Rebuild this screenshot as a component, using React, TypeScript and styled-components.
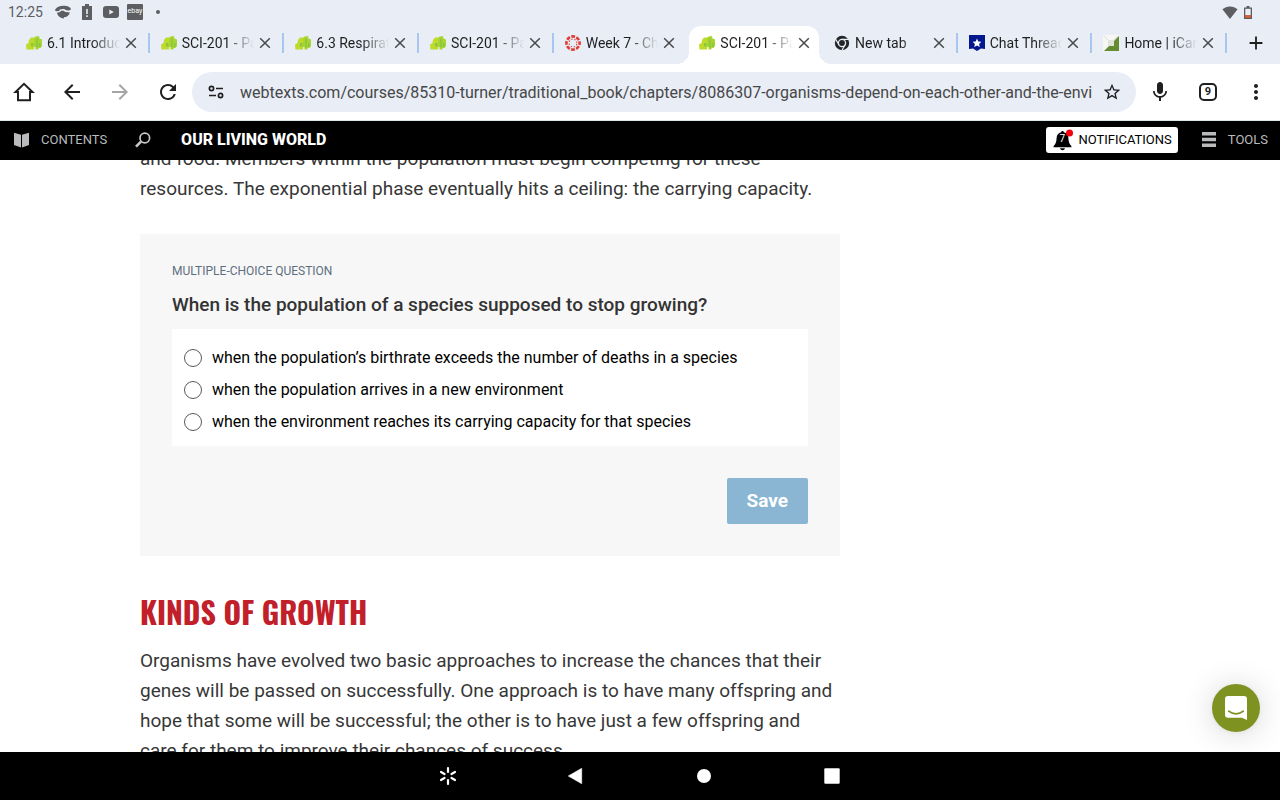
import React from 'react';
import styled, { createGlobalStyle, css } from 'styled-components';
import {
  MdAdd,
  MdArrowBack,
  MdArrowForward,
  MdMic,
  MdMoreVert,
  MdRefresh,
  MdStarBorder,
} from 'react-icons/md';

const GlobalStyle = createGlobalStyle`
  *, *::before, *::after { box-sizing: border-box; }
  body {
    margin: 0;
    background: #fff;
    font-family: Roboto, "Liberation Sans", sans-serif;
  }
  button, input { font: inherit; }
  h1, h2, p, fieldset { margin: 0; }
`;

const Screen = styled.div`
  display: flex;
  flex-direction: column;
  height: 100vh;
  overflow: hidden;
`;

/* ---------- status bar ---------- */

const StatusBar = styled.div`
  flex: none;
  display: flex;
  align-items: center;
  justify-content: space-between;
  height: 24px;
  padding: 0 28px 0 8px;
  background: #e8edf6;
  color: #5c5e62;
`;

const StatusGroup = styled.div<{ $gap: number }>`
  display: flex;
  align-items: center;
  gap: ${(p) => p.$gap}px;
`;

const Clock = styled.span`
  margin-right: 4px;
  font-size: 14px;
  line-height: 24px;
`;

/* ---------- tab strip ---------- */

const TabStrip = styled.div`
  flex: none;
  display: flex;
  height: 40px;
  padding-left: 15px;
  background: #e8edf6;
`;

const activeTab = css`
  margin: 2px 4px 0 1px;
  padding: 0 6px 4px 10px;
  border-radius: 12px 12px 0 0;
  background: #fff;
  &::before,
  &::after {
    content: '';
    position: absolute;
    bottom: 0;
    width: 12px;
    height: 12px;
  }
  &::before {
    right: 100%;
    background: radial-gradient(circle at 0 0, transparent 12px, #fff 12px);
  }
  &::after {
    left: 100%;
    background: radial-gradient(circle at 100% 0, transparent 12px, #fff 12px);
  }
`;

const Tab = styled.div<{ $active?: boolean; $divider?: boolean }>`
  position: relative;
  flex: 1 1 0;
  min-width: 0;
  display: flex;
  align-items: center;
  padding: 0 10px 2px 11px;
  ${(p) =>
    p.$divider &&
    css`
      &::after {
        content: '';
        position: absolute;
        right: 0;
        top: 9px;
        width: 2px;
        height: 20px;
        background: #a8c7f0;
      }
    `}
  ${(p) => p.$active && activeTab}
`;

const TabTitle = styled.span`
  flex: 1;
  min-width: 0;
  margin: 0 2px 0 5px;
  overflow: hidden;
  white-space: nowrap;
  font-size: 14px;
  line-height: 20px;
  color: #1f1f1f;
  mask-image: linear-gradient(90deg, #000 62%, transparent);
`;

const IconButton = styled.button<{ $w: number; $color?: string }>`
  flex: none;
  display: flex;
  align-items: center;
  justify-content: center;
  width: ${(p) => p.$w}px;
  padding: 0;
  border: 0;
  background: none;
  color: ${(p) => p.$color ?? '#1f1f1f'};
`;

const NewTab = styled.div`
  flex: none;
  display: flex;
  width: 53px;
  padding: 0 0 2px 5px;
`;

/* ---------- browser toolbar ---------- */

const Toolbar = styled.div`
  flex: none;
  display: flex;
  align-items: stretch;
  height: 57px;
  padding: 8px 0;
  border-bottom: 1px solid #dfe6ea;
`;

const AddressBar = styled.div`
  flex: 1;
  min-width: 0;
  display: flex;
  align-items: center;
  padding-right: 6px;
  border-radius: 20px;
  background: #e8edf6;
`;

const AddressInput = styled.input`
  flex: 1;
  min-width: 0;
  padding: 2px 0 0;
  border: 0;
  outline: 0;
  background: none;
  color: #474747;
  font-size: 16px;
  line-height: 24px;
`;

const TabCount = styled.span`
  display: block;
  width: 18px;
  height: 18px;
  border: 2px solid #1f1f1f;
  border-radius: 5px;
  font-size: 11px;
  font-weight: 700;
  line-height: 14px;
  text-align: center;
`;

/* ---------- book header ---------- */

const BookBar = styled.header`
  flex: none;
  display: flex;
  align-items: center;
  height: 39px;
  padding: 0 12px 2px 14px;
  background: #000;
`;

const BarButton = styled.button`
  display: flex;
  align-items: center;
  gap: 12px;
  padding: 0;
  border: 0;
  background: none;
  color: #b9bbbd;
  font-size: 13px;
  font-weight: 400;
  line-height: 26px;
`;

const SearchButton = styled(BarButton)`
  margin: 0 30px 0 28px;
`;

const BookTitle = styled.h1`
  flex: 1;
  color: #fff;
  font-size: 16px;
  font-weight: 800;
  line-height: 26px;
`;

const NotificationsButton = styled(BarButton)`
  gap: 5px;
  height: 26px;
  margin-right: 24px;
  padding: 0 6px 0 7px;
  border-radius: 3px;
  background: #fff;
  color: #000;
`;

const BellBox = styled.span`
  position: relative;
  display: block;
  width: 20px;
  height: 22px;
`;

const BellCount = styled.span`
  position: absolute;
  inset: 4px 2px auto 0;
  color: #fff;
  font-size: 10px;
  line-height: 12px;
  text-align: center;
`;

/* ---------- reading pane ---------- */

const Reader = styled.main`
  flex: 1;
  min-height: 0;
  overflow: hidden;
  padding: 0 20px 0 140px;
`;

const Column = styled.article`
  max-width: 700px;
  margin-top: -16px;
`;

const Paragraph = styled.p`
  color: #373737;
  font-size: 19px;
  line-height: 30px;
`;

const QuestionCard = styled.form`
  display: flex;
  flex-direction: column;
  margin: 30px 0 36px;
  padding: 28px 32px 32px;
  background: #f7f7f7;
`;

const Eyebrow = styled.div`
  color: #5d6f7e;
  font-size: 12px;
  line-height: 18px;
`;

const Question = styled.legend`
  padding: 10px 0 9px;
  color: #333;
  font-size: 19px;
  font-weight: 500;
  line-height: 30px;
`;

const OptionGroup = styled.fieldset`
  min-width: 0;
  margin-bottom: 32px;
  padding: 0;
  border: 0;
`;

const OptionList = styled.div`
  padding: 13px 12px 8px;
  background: #fff;
`;

const Option = styled.label`
  display: flex;
  align-items: center;
  gap: 10px;
  color: #000;
  font-size: 16px;
  line-height: 32px;
`;

const Radio = styled.input`
  appearance: none;
  flex: none;
  width: 18px;
  height: 18px;
  margin: 0;
  border: 1px solid #5a5a5a;
  border-radius: 50%;
  background: #fff;
  &:checked {
    border-width: 5px;
  }
`;

const SaveButton = styled.button`
  align-self: flex-end;
  padding: 8px 20px;
  border: 0;
  border-radius: 2px;
  background: #8ab6d4;
  color: #fff;
  font-size: 19px;
  font-weight: 700;
  line-height: 30px;
`;

const SectionTitle = styled.h2`
  margin-bottom: 14px;
  color: #c1202a;
  font-family: Oswald, 'Roboto Condensed', 'Liberation Sans Narrow', Roboto, sans-serif;
  font-size: 30px;
  font-weight: 700;
  line-height: 40px;
  text-transform: uppercase;
`;

const ChatButton = styled.button`
  position: fixed;
  right: 20px;
  bottom: 68px;
  display: flex;
  align-items: center;
  justify-content: center;
  width: 48px;
  height: 48px;
  padding: 0;
  border: 0;
  border-radius: 50%;
  background: #7e9222;
  box-shadow: 0 1px 6px rgba(0, 0, 0, 0.06), 0 2px 32px rgba(0, 0, 0, 0.16);
`;

/* ---------- system navigation ---------- */

const SystemNav = styled.nav`
  position: relative;
  flex: none;
  display: flex;
  justify-content: center;
  height: 48px;
  background: #000;
`;

/* ---------- icons ---------- */

const CloseIcon = () => (
  <svg width="12" height="12" viewBox="0 0 12 12" stroke="#47494c" strokeWidth="1.5">
    <path d="M1.2 1.2l9.6 9.6M10.8 1.2l-9.6 9.6" />
  </svg>
);

const LeafFavicon = () => (
  <svg width="16" height="16" viewBox="0 0 16 16">
    <path d="M0 9.500l2.500-1.500L3 5l2-2.500h3.500V9L8 14.500H.5z" fill="#c0da2a" />
    <path d="M8 3l1.500-1.500L13 1l.5 2.500L16 4.500v6.500l-1.500 2H13l-1 1.500H9.500V12H8z" fill="#aad530" />
    <path d="M5 8h2.500v3.500H5zM10.200 3.500h1.600v9h-1.600zM13 8h1.500v4H13z" fill="#86c843" />
  </svg>
);

const CanvasFavicon = () => (
  <svg width="16" height="16" viewBox="0 0 16 16" fill="none" stroke="#e23b34">
    <circle cx="8" cy="8" r="6.6" strokeWidth="2.6" strokeDasharray="3.8 1.38" strokeDashoffset="1.9" />
    <circle cx="8" cy="8" r="3.9" strokeWidth="1.2" strokeDasharray="1.2 1.86" strokeDashoffset="2.1" />
  </svg>
);

const ChromeFavicon = () => (
  <svg width="16" height="16" viewBox="0 0 16 16">
    <circle cx="8" cy="8" r="7.2" fill="#252628" />
    <circle cx="8" cy="8" r="3.6" fill="#252628" stroke="#e8edf6" strokeWidth="1.3" />
    <path d="M8 4.4h6.6M4.9 9.8L1.6 4.1M11.1 9.8l-3.3 5.7" stroke="#e8edf6" strokeWidth="1.2" />
  </svg>
);

const BadgeFavicon = () => (
  <svg width="16" height="16" viewBox="0 0 16 16">
    <path d="M0 0h16v14l-4-.6L8 16l-4-2.600L0 14z" fill="#03178f" />
    <path d="M8 3.600l1.300 2.900 3.100.3-2.300 2.100.7 3.100L8 10.400 5.200 12l.7-3.100-2.300-2.100 3.100-.3z" fill="#fff" />
  </svg>
);

const CampusFavicon = () => (
  <svg width="16" height="16" viewBox="0 0 16 16">
    <path d="M0 0h16v16H0z" fill="#f6f7f4" />
    <path d="M16 1v15H1z" fill="#658c31" />
    <path d="M5 5h6v6H5z" fill="#dfe3dc" />
    <path d="M1 1l4 4M11 5l4-4" stroke="#d9ddd5" />
  </svg>
);

const HandsetIcon = () => (
  <svg width="16" height="14" viewBox="0 0 16 14">
    <path d="M.2 4.500C1.500 2.200 4.500.8 8.400.8c4.100 0 7.400 1.300 7.400 3.300 0 1.100-1.400 1.500-2.600 1.300L10.800 5c-.9-.2-1-.8-1.400-1-1.500-.2-3.200 0-4.600.5 0 .8-.4 1.200-1.200 1.400l-2 .4C.5 6.400-.3 5.500.2 4.500z" fill="#5c5e62" />
    <path d="M2 7.800l3-.9 1-1.200h2.800c.5.8 1 1.100 2 1.300l4 .4c-.6 3-3 4.600-6 4.800l.3 1.200C5.500 13.300 2.600 11 2 7.800z" fill="#5c5e62" />
  </svg>
);

const BatteryAlertIcon = () => (
  <svg width="16" height="16" viewBox="-3 0 16 16">
    <path d="M3 0h4v2h3v14H0V2h3z" fill="#5c5e62" />
    <path d="M4.200 5h1.600v5H4.200zM4.200 11.300h1.600v1.600H4.200z" fill="#e8edf6" />
  </svg>
);

const VideoIcon = () => (
  <svg width="16" height="12" viewBox="0 0 16 12">
    <rect width="16" height="12" rx="3" fill="#5c5e62" />
    <path d="M6.300 3.400v5.200L10.800 6z" fill="#e8edf6" />
  </svg>
);

const ShopBadge = styled.span`
  width: 16px;
  height: 16px;
  border-radius: 1px;
  background: #5c5e62;
  color: #fff;
  font-size: 7px;
  line-height: 15px;
  text-align: center;
`;

const Dot = styled.span`
  width: 4px;
  height: 4px;
  margin-left: 5px;
  border-radius: 50%;
  background: #5c5e62;
`;

const WifiIcon = () => (
  <svg width="16" height="13" viewBox="0 0 16 13">
    <path d="M8 13L.4 3.300C2.500 1.400 5 .4 8 .4s5.500 1 7.600 2.900z" fill="#5c5e62" />
  </svg>
);

const BatteryLowIcon = () => (
  <svg width="8" height="13" viewBox="0 0 8 13">
    <path d="M2.500 0h3v1.500H8V13H0V1.500h2.500z" fill="#5c5e62" />
    <path d="M1.300 2.800h5.400v6.400H1.300z" fill="#e8edf6" />
    <path d="M1.300 9.200h5.400v2.500H1.300z" fill="#f05a2c" />
  </svg>
);

const HomeIcon = () => (
  <svg width="24" height="24" viewBox="0 0 24 24" fill="none" stroke="currentColor" strokeWidth="2">
    <path d="M3.500 12H6v8.200h12V12h2.500L12 3.900z" strokeLinejoin="miter" />
  </svg>
);

const SiteControlsIcon = () => (
  <svg width="16" height="14" viewBox="0 0 16 14" fill="none" stroke="#1f1f1f" strokeWidth="1.700">
    <circle cx="3.500" cy="3.500" r="2.100" />
    <circle cx="12.500" cy="10.500" r="2.100" />
    <path d="M8 3.500h7M1 10.500h7" />
  </svg>
);

const BookIcon = () => (
  <svg width="15" height="16" viewBox="0 0 15 16" fill="#b9bbbd">
    <path d="M0 .8l7 2V15.500l-7-2.500zM15 .8l-7 2v12.700l7-2.500z" />
  </svg>
);

const SearchIcon = () => (
  <svg width="16" height="16" viewBox="0 0 16 16" fill="none" stroke="#c4c6c8">
    <circle cx="9.800" cy="6" r="4.800" strokeWidth="1.700" />
    <path d="M6 9.600L1 14.600" strokeWidth="2.600" />
  </svg>
);

const BellIcon = () => (
  <svg width="20" height="22" viewBox="0 0 20 22">
    <path d="M9.500 2c.9 0 1.300.6 1.300 1.300 2.900.7 4.400 2.700 4.600 5.600.2 4 .9 6 3 8.100v1.200H.6V17c2.100-2.100 2.800-4.100 3-8.100.2-2.900 1.700-4.900 4.600-5.600C8.200 2.600 8.600 2 9.500 2z" fill="#000" />
    <path d="M7 19.200h5c-.3 1.300-1.300 2-2.500 2s-2.200-.7-2.500-2z" fill="#000" />
    <circle cx="16.500" cy="4" r="3.500" fill="#f5000c" />
  </svg>
);

const MenuIcon = () => (
  <svg width="14" height="15" viewBox="0 0 14 15" fill="#b9bbbd">
    <path d="M0 0h14v3.500H0zM0 5.700h14v3.500H0zM0 11.400h14V15H0z" />
  </svg>
);

const ChatIcon = () => (
  <svg width="22" height="24" viewBox="0 0 22 24">
    <path d="M3 0h16a3 3 0 0 1 3 3v21l-5-2.200H3a3 3 0 0 1-3-3V3a3 3 0 0 1 3-3z" fill="#fff" />
    <path d="M3.700 15.200c4.200 3.500 10.400 3.500 14.600 0" fill="none" stroke="#7e9222" strokeWidth="1.700" strokeLinecap="round" />
  </svg>
);

const AssistIcon = () => (
  <svg width="18" height="20" viewBox="0 0 18 20" stroke="#fff" strokeWidth="2.200" strokeLinecap="round">
    <path d="M9 2v4M9 14v4M2 6l3.500 2M12.500 12l3.500 2M2 14l3.500-2M12.500 8L16 6" />
  </svg>
);

const BackIcon = () => (
  <svg width="16" height="16" viewBox="0 0 16 16">
    <path d="M13.700.3v15.400L.3 8z" fill="#fff" stroke="#fff" strokeWidth=".6" strokeLinejoin="round" />
  </svg>
);

const CircleIcon = () => (
  <svg width="14" height="14" viewBox="0 0 14 14">
    <circle cx="7" cy="7" r="7" fill="#fff" />
  </svg>
);

const SquareIcon = () => (
  <svg width="16" height="16" viewBox="0 0 16 16">
    <rect x=".3" y=".3" width="15.400" height="15.400" rx="1" fill="#fff" />
  </svg>
);

const tabs = [
  { title: '6.1 Introduction', Icon: LeafFavicon, divider: true },
  { title: 'SCI-201 - Pace', Icon: LeafFavicon, divider: true },
  { title: '6.3 Respiration', Icon: LeafFavicon, divider: true },
  { title: 'SCI-201 - Pace', Icon: LeafFavicon, divider: true },
  { title: 'Week 7 - Chapter', Icon: CanvasFavicon },
  { title: 'SCI-201 - Pace', Icon: LeafFavicon, active: true },
  { title: 'New tab', Icon: ChromeFavicon, divider: true },
  { title: 'Chat Threads', Icon: BadgeFavicon, divider: true },
  { title: 'Home | iCampus', Icon: CampusFavicon, divider: true },
];

const options = [
  'when the population’s birthrate exceeds the number of deaths in a species',
  'when the population arrives in a new environment',
  'when the environment reaches its carrying capacity for that species',
];

export default function App() {
  return (
    <Screen>
      <GlobalStyle />
      <StatusBar>
        <StatusGroup $gap={8}>
          <Clock>12:25</Clock>
          <HandsetIcon />
          <BatteryAlertIcon />
          <VideoIcon />
          <ShopBadge>ebay</ShopBadge>
          <Dot />
        </StatusGroup>
        <StatusGroup $gap={6}>
          <WifiIcon />
          <BatteryLowIcon />
        </StatusGroup>
      </StatusBar>

      <TabStrip>
        {tabs.map(({ title, Icon, active, divider }, i) => (
          <Tab key={i} $active={active} $divider={divider}>
            <Icon />
            <TabTitle>{title}</TabTitle>
            <IconButton $w={18} aria-label={`Close ${title}`}>
              <CloseIcon />
            </IconButton>
          </Tab>
        ))}
        <NewTab>
          <IconButton $w={48} aria-label="New tab">
            <MdAdd size={22} />
          </IconButton>
        </NewTab>
      </TabStrip>

      <Toolbar>
        <IconButton $w={48} aria-label="Home"><HomeIcon /></IconButton>
        <IconButton $w={48} aria-label="Back"><MdArrowBack size={24} /></IconButton>
        <IconButton $w={48} $color="#a5a5a5" aria-label="Forward"><MdArrowForward size={24} /></IconButton>
        <IconButton $w={48} aria-label="Reload"><MdRefresh size={24} /></IconButton>
        <AddressBar>
          <IconButton $w={48} aria-label="Site settings"><SiteControlsIcon /></IconButton>
          <AddressInput
            aria-label="Address"
            defaultValue="webtexts.com/courses/85310-turner/traditional_book/chapters/8086307-organisms-depend-on-each-other-and-the-envi"
          />
          <IconButton $w={36} aria-label="Bookmark"><MdStarBorder size={20} /></IconButton>
        </AddressBar>
        <IconButton $w={48} aria-label="Voice search"><MdMic size={24} /></IconButton>
        <IconButton $w={48} aria-label="Open tabs"><TabCount>9</TabCount></IconButton>
        <IconButton $w={48} aria-label="More"><MdMoreVert size={24} /></IconButton>
      </Toolbar>

      <BookBar>
        <BarButton><BookIcon />CONTENTS</BarButton>
        <SearchButton aria-label="Search"><SearchIcon /></SearchButton>
        <BookTitle>OUR LIVING WORLD</BookTitle>
        <NotificationsButton>
          <BellBox>
            <BellIcon />
            <BellCount>7</BellCount>
          </BellBox>
          NOTIFICATIONS
        </NotificationsButton>
        <BarButton><MenuIcon />TOOLS</BarButton>
      </BookBar>

      <Reader>
        <Column>
          <Paragraph>
            and food. Members within the population must begin competing for these
            resources. The exponential phase eventually hits a ceiling: the carrying capacity.
          </Paragraph>
          <QuestionCard onSubmit={(e) => e.preventDefault()}>
            <Eyebrow>MULTIPLE-CHOICE QUESTION</Eyebrow>
            <OptionGroup>
              <Question>When is the population of a species supposed to stop growing?</Question>
              <OptionList>
                {options.map((text) => (
                  <Option key={text}>
                    <Radio type="radio" name="answer" />
                    {text}
                  </Option>
                ))}
              </OptionList>
            </OptionGroup>
            <SaveButton>Save</SaveButton>
          </QuestionCard>
          <SectionTitle>Kinds of Growth</SectionTitle>
          <Paragraph>
            Organisms have evolved two basic approaches to increase the chances that their
            genes will be passed on successfully. One approach is to have many offspring and
            hope that some will be successful; the other is to have just a few offspring and
            care for them to improve their chances of success.
          </Paragraph>
        </Column>
      </Reader>

      <ChatButton aria-label="Open chat"><ChatIcon /></ChatButton>

      <SystemNav>
        <IconButton $w={128} aria-label="Assistant"><AssistIcon /></IconButton>
        <IconButton $w={128} aria-label="System back"><BackIcon /></IconButton>
        <IconButton $w={128} aria-label="System home"><CircleIcon /></IconButton>
        <IconButton $w={128} aria-label="Recent apps"><SquareIcon /></IconButton>
      </SystemNav>
    </Screen>
  );
}
